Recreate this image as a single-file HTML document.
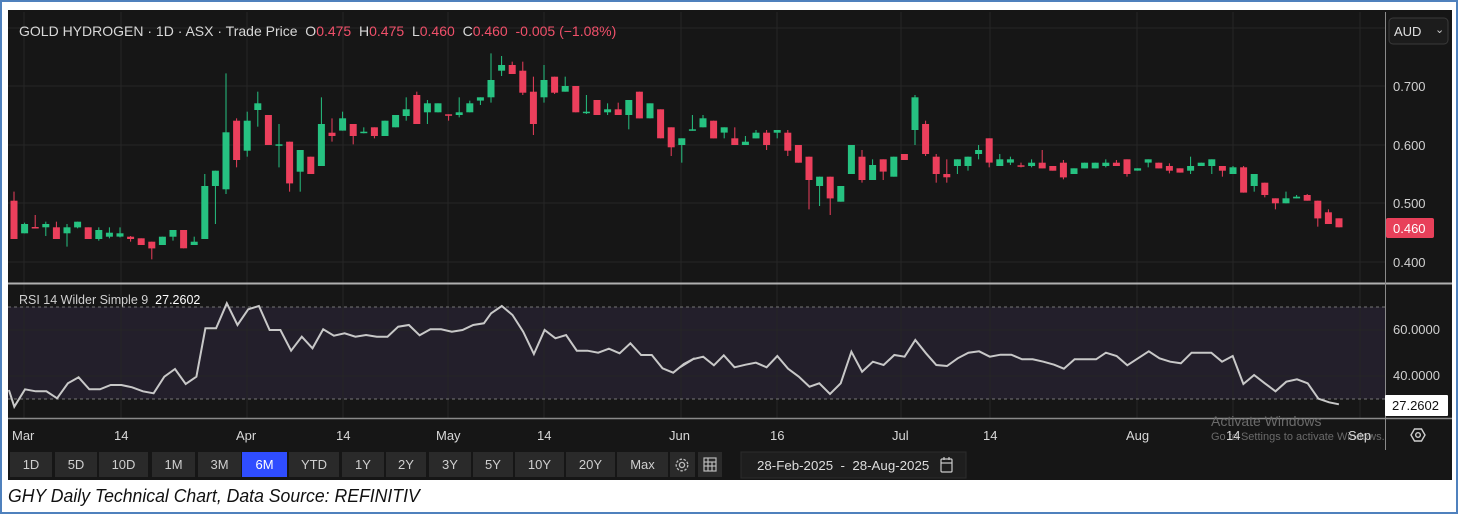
<!DOCTYPE html>
<html><head><meta charset="utf-8">
<style>
html,body{margin:0;padding:0;background:#fff;}
body{width:1458px;height:514px;position:relative;overflow:hidden;font-family:"Liberation Sans",sans-serif;}
#frame{position:absolute;left:0;top:0;width:1454px;height:510px;border:2px solid #4f81bd;}
#dark{position:absolute;left:8px;top:10px;width:1444px;height:470px;background:#161616;}
.t{position:absolute;white-space:nowrap;}
.btn{position:absolute;top:452px;height:25px;background:#2a2a2a;color:#cfcfcf;font-size:13px;line-height:25px;text-align:center;}
</style></head><body>
<div id="frame"></div>
<div id="dark"></div>
<svg id="ch" width="1458" height="514" style="position:absolute;left:0;top:0">
<rect x="8" y="307" width="1377" height="92" fill="#231f2b"/>
<g id="grid" stroke="#262626" stroke-width="1"></g>
<line x1="8" y1="307" x2="1385" y2="307" stroke="#777" stroke-dasharray="3,3"/>
<line x1="8" y1="399" x2="1385" y2="399" stroke="#777" stroke-dasharray="3,3"/>
<line x1="8" y1="283.5" x2="1452" y2="283.5" stroke="#b0b0b0" stroke-width="2"/>
<line x1="8" y1="418.5" x2="1452" y2="418.5" stroke="#8a8a8a" stroke-width="1.5"/>
<line x1="1385.5" y1="12" x2="1385.5" y2="450" stroke="#8a8a8a" stroke-width="1"/>
<g id="candles"></g>
<polyline id="rsi" fill="none" stroke="#c8c8c8" stroke-width="2"/>
<rect x="1389" y="18" width="59" height="26" rx="4" fill="#1c1c1c" stroke="#3a3a3a"/>
<rect x="1386" y="218" width="48" height="20" rx="2" fill="#e8405a"/>
<rect x="1385" y="395" width="63" height="21" rx="1" fill="#ffffff"/>
<g transform="translate(1418,435)" fill="none" stroke="#cfcfcf" stroke-width="1.4">
<polygon points="-7,0 -3.5,-6 3.5,-6 7,0 3.5,6 -3.5,6"/><circle r="2.3"/></g>
<rect x="741" y="452" width="225" height="26" fill="#1e1e1e" stroke="#2c2c2c"/>
<g transform="translate(941,458)" fill="none" stroke="#ccc" stroke-width="1.2">
<rect x="0" y="1" width="11" height="13" rx="1"/><line x1="0" y1="5" x2="11" y2="5"/><line x1="3" y1="-1" x2="3" y2="2"/><line x1="8" y1="-1" x2="8" y2="2"/></g>
</svg>

<div class="t" style="left:19px;top:23px;font-size:14px;color:#d8d8d8">GOLD HYDROGEN · 1D · ASX · Trade Price &nbsp;O<span style="color:#f0506a">0.475</span> &nbsp;H<span style="color:#f0506a">0.475</span> &nbsp;L<span style="color:#f0506a">0.460</span> &nbsp;C<span style="color:#f0506a">0.460 &nbsp;-0.005 (−1.08%)</span></div>
<div class="t" style="left:1394px;top:24px;font-size:13px;color:#e0e0e0">AUD</div>
<div class="t" style="left:1435px;top:23px;font-size:11px;color:#ccc">⌄</div>
<div class="t" style="left:1393px;top:79px;font-size:13px;color:#d0d0d0">0.700</div>
<div class="t" style="left:1393px;top:138px;font-size:13px;color:#d0d0d0">0.600</div>
<div class="t" style="left:1393px;top:196px;font-size:13px;color:#d0d0d0">0.500</div>
<div class="t" style="left:1393px;top:221px;font-size:13px;color:#fff">0.460</div>
<div class="t" style="left:1393px;top:255px;font-size:13px;color:#d0d0d0">0.400</div>
<div class="t" style="left:1393px;top:322px;font-size:13px;color:#d0d0d0">60.0000</div>
<div class="t" style="left:1393px;top:368px;font-size:13px;color:#d0d0d0">40.0000</div>
<div class="t" style="left:1392px;top:398px;font-size:13px;color:#111">27.2602</div>
<div class="t" style="left:19px;top:293px;font-size:12.5px;color:#d0d0d0">RSI 14 Wilder Simple 9 &nbsp;<span style="color:#fff">27.2602</span></div>

<div class="t" style="left:1211px;top:413px;font-size:14px;color:#6a6a6a">Activate Windows</div>
<div class="t" style="left:1211px;top:431px;font-size:11px;color:#6a6a6a">Go to Settings to activate Windows.</div>

<div id="xl"></div>

<div class="btn" style="left:10px;width:42px">1D</div>
<div class="btn" style="left:55px;width:42px">5D</div>
<div class="btn" style="left:99px;width:49px">10D</div>
<div class="btn" style="left:152px;width:43px">1M</div>
<div class="btn" style="left:198px;width:43px">3M</div>
<div class="btn" style="left:242px;width:45px;background:#2f4dff;color:#fff">6M</div>
<div class="btn" style="left:289px;width:50px">YTD</div>
<div class="btn" style="left:342px;width:42px">1Y</div>
<div class="btn" style="left:386px;width:40px">2Y</div>
<div class="btn" style="left:429px;width:42px">3Y</div>
<div class="btn" style="left:473px;width:40px">5Y</div>
<div class="btn" style="left:515px;width:49px">10Y</div>
<div class="btn" style="left:566px;width:49px">20Y</div>
<div class="btn" style="left:617px;width:51px">Max</div>
<div class="btn" style="left:670px;width:25px"></div>
<div class="btn" style="left:698px;width:24px"></div>
<svg width="1458" height="514" style="position:absolute;left:0;top:0">
<g transform="translate(682,465)" fill="none" stroke="#bbb" stroke-width="1.3">
<circle r="2.6"/><circle r="5.8" stroke-dasharray="2.5,1.6"/></g>
<g transform="translate(704,458)" fill="none" stroke="#bbb" stroke-width="1.2">
<rect x="0" y="0" width="12" height="13"/><line x1="4" y1="0" x2="4" y2="13"/><line x1="0" y1="4" x2="12" y2="4"/><line x1="0" y1="8" x2="12" y2="8"/><line x1="8" y1="4" x2="8" y2="13"/></g>
</svg>
<div class="t" style="left:757px;top:458px;font-size:13.3px;color:#ddd">28-Feb-2025 &nbsp;-&nbsp; 28-Aug-2025</div>

<div class="t" style="left:8px;top:486px;font-size:18px;font-style:italic;color:#111;transform:scaleX(0.98);transform-origin:left">GHY Daily Technical Chart, Data Source: REFINITIV</div>

<script>
var C=[["r",452,567,425,567],["g",522,550,518,550],["r",531,534,495,535],["g",522,532,515,558],["r",532,567,515,567],["g",532,550,522,590],["g",515,532,515,535],["r",532,567,532,567],["g",540,567,532,572],["g",548,560,532,565],["g",550,560,532,562],["r",560,567,558,575],["r",565,585,565,585],["r",575,595,575,628],["g",560,585,560,585],["g",540,560,540,572],["r",540,595,540,595],["g",575,585,560,585],["g",408,567,372,567],["g",362,408,362,522],["g",247,418,70,432],["r",212,330,205,352],["g",212,302,185,320],["g",160,180,125,230],["r",195,285,195,285],["g",283,287,222,352],["r",275,400,275,425],["g",300,365,300,425],["r",320,372,320,372],["g",222,348,142,348],["r",248,258,205,275],["g",205,242,185,242],["r",222,258,222,283],["g",245,249,232,250],["r",232,258,232,265],["g",212,258,212,258],["g",195,232,195,232],["g",178,198,142,212],["r",135,222,125,222],["g",160,187,150,222],["g",160,187,160,187],["r",193,197,193,212],["g",187,195,142,202],["g",160,187,152,187],["g",142,152,142,165],["g",90,142,10,158],["g",45,62,18,78],["r",45,72,35,72],["r",62,128,35,135],["r",125,222,80,255],["g",90,142,45,158],["r",80,128,80,132],["g",108,125,80,125],["r",108,187,108,187],["g",185,189,135,192],["r",150,195,150,195],["g",178,187,160,195],["r",178,195,158,195],["g",150,195,150,238],["r",125,205,125,205],["g",160,205,160,205],["r",178,265,178,265],["r",232,292,232,318],["g",265,285,265,338],
["g",238,242,195,242],["g",205,232,195,232],["r",212,265,212,265],["g",232,248,232,265],["r",265,285,232,285],["g",275,285,258,285],["g",248,265,240,265],["r",248,285,240,300],["g",240,248,240,265],["r",248,302,240,318],["r",285,338,285,338],["r",320,390,320,478],["g",380,408,380,468],["r",380,445,380,495],["g",408,455,408,455],["g",285,372,285,372],["r",320,390,300,398],["g",345,390,328,390],["r",328,365,328,390],["g",320,380,320,380],["r",312,330,312,330],["g",142,240,135,285],["r",222,312,212,318],["r",320,372,312,398],["r",372,382,328,398],["g",328,348,328,372],["g",320,348,320,362],["g",300,312,285,328],["r",265,338,265,352],["g",328,348,312,348],["g",328,338,320,345],["r",346,350,338,352],["g",338,348,328,352],["r",338,355,300,355],["r",348,362,348,362],["r",338,382,330,388],["g",355,372,355,372],["g",338,355,338,355],["g",338,355,338,355],["g",338,348,328,352],["r",338,348,330,348],["r",328,372,328,380],["g",355,362,355,362],["g",328,338,328,352],["r",338,355,338,355],["r",348,362,340,370],["r",355,368,355,368],["g",348,362,320,372],["g",338,348,338,348],["g",328,348,328,372],["r",348,362,348,380],["g",352,372,348,372],["r",352,428,348,428],["g",372,408,372,425],["r",398,435,398,442],["r",445,460,445,478],["g",445,460,425,460],["g",440,445,435,445],["r",435,452,432,452],["r",452,505,452,530],["r",487,522,478,522],["r",505,532,505,532]];
var g=document.getElementById("candles"),n=C.length,sp=(1339-14)/(n-1),h="";
C.forEach(function(c,i){var x=14+i*sp,col=c[0]=="g"?"#26c281":"#ec3f5c",Y=function(v){return 50+v/3};
var t=Y(c[1]),b=Y(c[2]);if(b-t<1.5)b=t+1.5;
h+='<line x1="'+x.toFixed(1)+'" x2="'+x.toFixed(1)+'" y1="'+Y(c[3])+'" y2="'+Y(c[4])+'" stroke="'+col+'" stroke-width="1"/>';
h+='<rect x="'+(x-3.5).toFixed(1)+'" y="'+t.toFixed(1)+'" width="7" height="'+(b-t).toFixed(1)+'" fill="'+col+'"/>';});
g.innerHTML=h;
var R1=[[20,1020],[32,1070],[56,1018],[80,1024],[104,1024],[128,1045],[152,1000],[176,982],[200,1018],[224,1018],[248,1005],[272,1005],[296,1012],[320,1024],[344,1030],[368,980],[392,957],[416,1002],[440,980],[460,835],[484,835],[508,760],[532,825],[556,778],[580,768],[604,840],[628,840],[652,902],[676,860],[700,895],[724,838],[748,857],[772,850],[796,860],[820,855],[844,860],[868,860],[892,830],[916,825],[940,856],[964,838],[988,838],[1012,845],[1036,840],[1060,825],[1084,820],[1100,790],[1124,768],[1148,795],[1172,845],[1196,912],[1220,840],[1244,865],[1268,855],[1292,902],[1316,902],[1340,908],[1364,896],[1388,910],[1412,880],[1436,915],[1460,915],[1484,955],[1508,968],[1532,942],[1556,925]];
var R2=[[0,952],[28,928],[52,920],[76,946],[98,916],[122,952],[147,944],[170,938],[194,952],[218,918],[242,956],[266,980],[290,1010],[312,1000],[336,1032],[360,1000],[384,905],[408,965],[432,935],[456,945],[480,915],[503,920],[527,870],[551,910],[574,945],[598,948],[622,925],[646,908],[670,904],[694,920],[718,914],[742,914],[766,928],[790,928],[814,935],[838,944],[860,956],[884,928],[908,928],[932,928],[954,908],[978,918],[1002,946],[1026,925],[1050,904],[1074,925],[1098,935],[1122,940],[1146,908],[1170,908],[1190,908],[1214,935],[1238,918],[1262,1002],[1286,975],[1310,1000],[1334,1024],[1358,995],[1382,988],[1406,1000],[1430,1046],[1454,1057],[1476,1063]];
var p=[];R1.forEach(function(a){p.push((a[0]/2.24).toFixed(1)+","+(50+a[1]/3).toFixed(1))});
R2.forEach(function(a){p.push((680+a[0]/2.24).toFixed(1)+","+(50+a[1]/3).toFixed(1))});
document.getElementById("rsi").setAttribute("points",p.join(" "));
var gr="",hs=[28,86,145,203,262,330,376],vs=[24,121,247,343,448,544,681,777,901,990,1137,1233,1360];
hs.forEach(function(y){gr+='<line x1="8" x2="1385" y1="'+y+'" y2="'+y+'"/>'});
vs.forEach(function(x){gr+='<line x1="'+x+'" x2="'+x+'" y1="12" y2="418"/>'});
document.getElementById("grid").innerHTML=gr;
var L=[["Mar",12],["14",114],["Apr",236],["14",336],["May",436],["14",537],["Jun",669],["16",770],["Jul",892],["14",983],["Aug",1126],["14",1226],["Sep",1348]],xh="";
L.forEach(function(l){xh+='<div class="t" style="left:'+l[1]+'px;top:428px;font-size:13px;color:#d8d8d8">'+l[0]+'</div>'});
document.getElementById("xl").innerHTML=xh;
</script>
</body></html>
